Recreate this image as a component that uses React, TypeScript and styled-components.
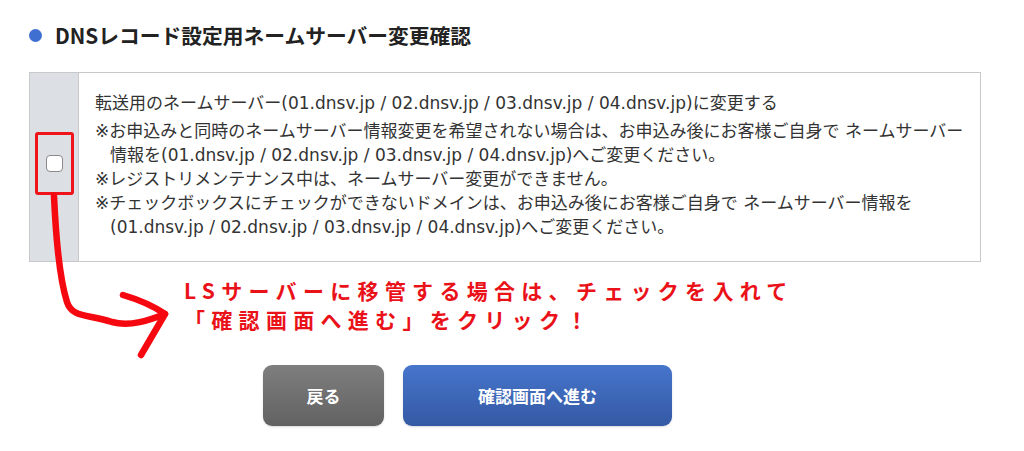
import styled, { createGlobalStyle } from "styled-components";

const GlobalStyle = createGlobalStyle`
  body {
    margin: 0;
    background: #fff;
  }
`;

const Page = styled.div`
  position: relative;
  width: 1024px;
  height: 451px;
  padding: 22px 43px 0 29px;
  box-sizing: border-box;
  overflow: hidden;
`;

const Heading = styled.h2`
  display: flex;
  align-items: center;
  gap: 13px;
  margin: 0;
  height: 26px;
  font-family: "Noto Sans CJK JP", sans-serif;
  font-size: 20.75px;
  font-weight: 700;
  color: #222;
`;

const Dot = styled.span`
  width: 13px;
  height: 13px;
  border-radius: 50%;
  background: #3f6fd0;
  flex-shrink: 0;
`;

const Box = styled.div`
  display: flex;
  margin-top: 24px;
  border: 1px solid #c8c8c8;
`;

const CheckCell = styled.div`
  width: 49px;
  flex-shrink: 0;
  display: flex;
  align-items: center;
  justify-content: center;
  background: #dcdfe4;
  border-right: 1px solid #c8c8c8;
  padding-bottom: 7px;
  box-sizing: border-box;
`;

const Highlight = styled.div`
  width: 39px;
  height: 63px;
  box-sizing: border-box;
  border: 3.5px solid #f0141a;
  border-radius: 3px;
  display: flex;
  align-items: center;
  justify-content: center;
`;

const Checkbox = styled.span`
  width: 17px;
  height: 17px;
  box-sizing: border-box;
  border: 1.5px solid #8a8a8a;
  border-radius: 4px;
  background: #fff;
`;

const Body = styled.div`
  flex: 1;
  padding: 18px 20px 22px 16px;
  font-family: "DejaVu Sans", "Noto Sans CJK JP", sans-serif;
  font-size: 17px;
  line-height: 24px;
  color: #333;
  white-space: nowrap;
`;

const Lead = styled.p`
  margin: 0 0 4px;
`;

const Note = styled.p`
  margin: 0;
  padding-left: 15px;
  text-indent: -15px;
`;

const Callout = styled.p`
  margin: 14px 0 0 155px;
  font-family: "Noto Sans CJK JP", sans-serif;
  font-size: 21px;
  font-weight: 700;
  line-height: 29px;
  letter-spacing: 6.3px;
  color: #ea1219;
  white-space: nowrap;
`;

const Actions = styled.div`
  display: flex;
  gap: 19px;
  margin: 31px 0 0 234px;
`;

const Button = styled.button<{ $primary?: boolean }>`
  width: ${(p) => (p.$primary ? "269px" : "121px")};
  height: 61px;
  border: none;
  border-radius: 9px;
  background: ${(p) =>
    p.$primary
      ? "linear-gradient(#4675cc, #3559a4)"
      : "linear-gradient(#7e7e7e, #626262)"};
  color: #fff;
  font-family: "Noto Sans CJK JP", sans-serif;
  font-size: 17px;
  font-weight: 700;
  box-shadow: 0 1px 2px rgba(0, 0, 0, 0.15);
`;

const Arrow = styled.svg`
  position: absolute;
  left: 0;
  top: 0;
  pointer-events: none;
`;

function App() {
  return (
    <Page>
      <GlobalStyle />
      <Heading>
        <Dot />
        DNSレコード設定用ネームサーバー変更確認
      </Heading>
      <Box>
        <CheckCell>
          <Highlight>
            <Checkbox />
          </Highlight>
        </CheckCell>
        <Body>
          <Lead>
            転送用のネームサーバー(01.dnsv.jp / 02.dnsv.jp / 03.dnsv.jp /
            04.dnsv.jp)に変更する
          </Lead>
          <Note>
            ※お申込みと同時のネームサーバー情報変更を希望されない場合は、お申込み後にお客様ご自身で
            ネームサーバー
            <br />
            情報を(01.dnsv.jp / 02.dnsv.jp / 03.dnsv.jp / 04.dnsv.jp)へご変更ください。
          </Note>
          <Note>※レジストリメンテナンス中は、ネームサーバー変更ができません。</Note>
          <Note>
            ※チェックボックスにチェックができないドメインは、お申込み後にお客様ご自身で
            ネームサーバー情報を
            <br />
            (01.dnsv.jp / 02.dnsv.jp / 03.dnsv.jp / 04.dnsv.jp)へご変更ください。
          </Note>
        </Body>
      </Box>
      <Callout>
        LSサーバーに移管する場合は、チェックを入れて
        <br />
        「確認画面へ進む」をクリック！
      </Callout>
      <Actions>
        <Button>戻る</Button>
        <Button $primary>確認画面へ進む</Button>
      </Actions>
      <Arrow width="200" height="380" viewBox="0 0 200 380">
        <g fill="none" stroke="#f5080f" strokeWidth="6.5" strokeLinecap="round" strokeLinejoin="round">
          <path d="M54 196 C56 240 60 280 67 302 C72 318 88 314 112 322 C130 327 150 320 165 314" />
          <path d="M123 295 C140 300 155 307 165 314 L141 355" />
        </g>
      </Arrow>
    </Page>
  );
}

export default App;
